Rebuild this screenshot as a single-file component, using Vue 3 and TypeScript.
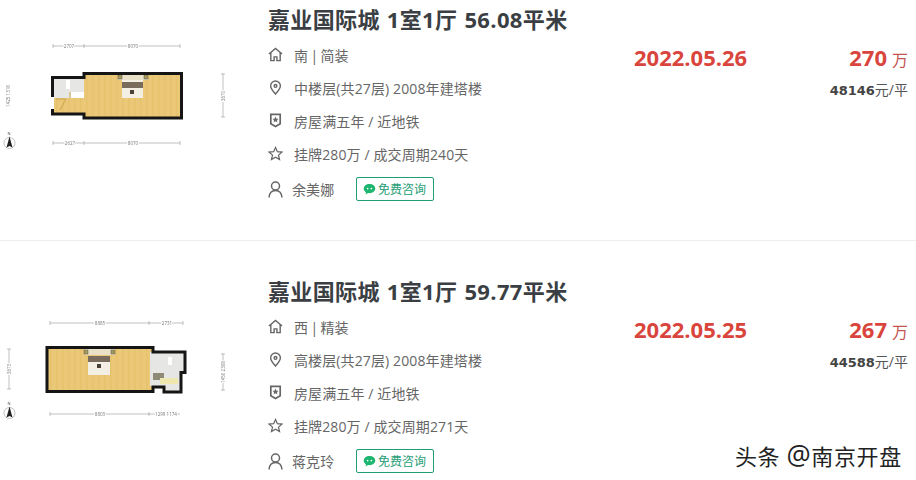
<script setup lang="ts">
interface Listing {
  title: string;
  face: string;
  floor: string;
  traffic: string;
  deal: string;
  agent: string;
  date: string;
  price: string;
  unit: string;
  plan: "a" | "b";
}

const listings: Listing[] = [
  {
    title: "嘉业国际城 1室1厅 56.08平米",
    face: "南 | 简装",
    floor: "中楼层(共27层) 2008年建塔楼",
    traffic: "房屋满五年 / 近地铁",
    deal: "挂牌280万 / 成交周期240天",
    agent: "余美娜",
    date: "2022.05.26",
    price: "270",
    unit: "48146",
    plan: "a",
  },
  {
    title: "嘉业国际城 1室1厅 59.77平米",
    face: "西 | 精装",
    floor: "高楼层(共27层) 2008年建塔楼",
    traffic: "房屋满五年 / 近地铁",
    deal: "挂牌280万 / 成交周期271天",
    agent: "蒋克玲",
    date: "2022.05.25",
    price: "267",
    unit: "44588",
    plan: "b",
  },
];
</script>

<template>
  <div class="page">
    <div v-for="item in listings" :key="item.date" class="listing">
      <svg v-if="item.plan === 'a'" class="plan" viewBox="0 0 240 130">
        <defs>
          <pattern id="wood-a" width="6" height="130" patternUnits="userSpaceOnUse">
            <rect width="6" height="130" fill="#ebc877" />
            <rect x="2" width="1.500" height="130" fill="#e6c26c" />
          </pattern>
        </defs>
        <g class="dim">
          <path d="M53 16H180M53 14v4M84 14v4M180 14v4" />
          <path d="M53 113H180M53 111v4M84 111v4M180 111v4" />
          <path d="M223 44v43M221 44h4M221 87h4" />
        </g>
        <g class="dim-text">
          <text x="69" y="18" text-anchor="middle">2707</text>
          <text x="133" y="18" text-anchor="middle">8070</text>
          <text x="70" y="115" text-anchor="middle">2627</text>
          <text x="133" y="115" text-anchor="middle">8070</text>
          <text transform="translate(10 66) rotate(-90)" text-anchor="middle">1425 1318</text>
          <text transform="translate(224.500 66) rotate(-90)" text-anchor="middle">3670</text>
        </g>
        <path d="M84 44H181V88H84V83H54V68H84Z" fill="url(#wood-a)" />
        <path class="tile" d="M54 48H84V62H71V68H54Z" />
        <rect x="66" y="50" width="4" height="9" fill="#fff" />
        <rect x="118" y="44" width="30" height="6" fill="#e9e2c8" />
        <rect class="bed-side" x="118" y="45" width="4" height="4" />
        <rect class="bed-side" x="144" y="45" width="4" height="4" />
        <rect class="bed" x="122" y="50" width="21" height="18" />
        <rect class="bed-head" x="122" y="52" width="21" height="6" />
        <rect x="130" y="60" width="4" height="4" fill="#4a4136" />
        <path class="wall" d="M52.500 67V47.500H84V43.500H181.500V88H84V84H52.500V79" />
        <path class="door" d="M56 69H66L60 80" />
        <path d="M70 62V68" stroke="#c9a64f" fill="none" />
        <g class="north">
          <text x="9" y="105" text-anchor="middle">N</text>
          <circle cx="9.500" cy="113" r="5.500" />
          <path d="M9.500 106.500L6.500 117.500L9.500 116L12.500 117.500Z" />
        </g>
      </svg>
      <svg v-else class="plan" viewBox="0 0 240 130">
        <defs>
          <pattern id="wood-b" width="6" height="130" patternUnits="userSpaceOnUse">
            <rect width="6" height="130" fill="#ebc877" />
            <rect x="2" width="1.500" height="130" fill="#e6c26c" />
          </pattern>
        </defs>
        <g class="dim">
          <path d="M50 21H183M50 19v4M149 19v4M183 19v4" />
          <path d="M50 112H180M50 110v4M149 110v4" />
          <path d="M9 47v40M7 47h4M7 87h4" />
          <path d="M223 52v36M221 52h4M221 88h4" />
        </g>
        <g class="dim-text">
          <text x="100" y="23" text-anchor="middle">8885</text>
          <text x="167" y="23" text-anchor="middle">2731</text>
          <text x="100" y="114" text-anchor="middle">8803</text>
          <text x="166" y="114" text-anchor="middle">1299 1174</text>
          <text transform="translate(10.500 67) rotate(-90)" text-anchor="middle">3673</text>
          <text transform="translate(224.500 70) rotate(-90)" text-anchor="middle">1450 2308</text>
        </g>
        <path d="M48 45H152V89H48Z" fill="url(#wood-b)" />
        <path class="tile" d="M150 50H184V70H180V89H164V84H150Z" />
        <rect x="85" y="47" width="30" height="6" fill="#e9e2c8" />
        <rect class="bed-side" x="84" y="48" width="4" height="4" />
        <rect class="bed-side" x="111" y="48" width="4" height="4" />
        <rect class="bed" x="88" y="54" width="22" height="19" />
        <rect class="bed-head" x="88" y="54" width="22" height="6" />
        <rect x="97" y="62" width="4" height="4" fill="#4a4136" />
        <rect x="153" y="71" width="11" height="7" fill="#8f8a78" />
        <rect class="bath" x="160" y="76" width="18" height="6" />
        <rect x="168" y="55" width="4" height="8" fill="#fff" />
        <path class="wall" d="M47 45.500H153V50H185V70.500H181V90H164V85H153V89.500H47Z" />
        <g class="north">
          <text x="9" y="103" text-anchor="middle">N</text>
          <circle cx="9.500" cy="111" r="5.500" />
          <path d="M9.500 104.500L6.500 115.500L9.500 114L12.500 115.500Z" />
        </g>
      </svg>

      <div class="info">
        <h2 class="title">{{ item.title }}</h2>
        <div class="meta">
          <svg class="icon" viewBox="0 0 16 16">
            <path d="M1 7.500L8 1.500L15 7.500M3 6V14.500H6.500V10.500H9.500V14.500H13V6" />
          </svg>
          <span class="face">{{ item.face }}</span>
        </div>
        <div class="meta">
          <svg class="icon" viewBox="0 0 16 16">
            <path d="M8 15C5 11.500 2.800 9 2.800 6.300A5.200 5.200 0 0 1 13.200 6.300C13.200 9 11 11.500 8 15Z" />
            <circle cx="8" cy="6.300" r="1.500" />
          </svg>
          <span>{{ item.floor }}</span>
        </div>
        <div class="meta">
          <svg class="icon" viewBox="0 0 16 16">
            <path class="thick" d="M3 1.500H13V11.500L8 14.500L3 11.500Z" />
            <path class="fill" d="M8 3.800L9 6L11.200 6.200L9.600 7.700L10 9.900L8 8.800L6 9.900L6.400 7.700L4.800 6.200L7 6Z" />
          </svg>
          <span>{{ item.traffic }}</span>
        </div>
        <div class="meta">
          <svg class="icon star" viewBox="0 0 16 16">
            <path d="M8 1.500L10 6L14.800 6.500L11.200 9.700L12.300 14.500L8 12L3.700 14.500L4.800 9.700L1.200 6.500L6 6Z" />
          </svg>
          <span>{{ item.deal }}</span>
        </div>
        <div class="meta agent">
          <svg class="icon person" viewBox="0 0 15 17">
            <circle cx="7.500" cy="5" r="4" />
            <path d="M1 16.500C1.400 12 3.800 9.500 7.500 9.500S13.600 12 14 16.500" />
          </svg>
          <span class="agent-name">{{ item.agent }}</span>
          <span class="consult">
            <svg class="chat" viewBox="0 0 14 14">
              <path d="M7 1C3.400 1 .8 3.200 .8 6C.8 7.700 1.700 9.100 3.200 10L2.800 12.500L5.300 10.900C5.900 11 6.400 11 7 11C10.600 11 13.200 8.800 13.200 6S10.600 1 7 1Z" />
              <circle cx="5" cy="6" r=".9" />
              <circle cx="9" cy="6" r=".9" />
            </svg>
            免费咨询
          </span>
        </div>
      </div>

      <div class="date">{{ item.date }}</div>

      <div class="price">
        <div class="total">
          <b>{{ item.price }}</b>
          <span>万</span>
        </div>
        <div class="per"><b>{{ item.unit }}</b>元/平</div>
      </div>
    </div>

    <div class="watermark">头条 <span class="at">@</span>南京开盘</div>
  </div>
</template>

<style>
html,
body {
  background: #fff;
  overflow: hidden;
}
</style>

<style scoped>
.page {
  position: relative;
  width: 916px;
  height: 480px;
  overflow: hidden;
  font-family: "Open Sans", "Noto Sans CJK SC", sans-serif;
  color: #666;
}

.listing {
  display: flex;
  height: 241px;
  margin-bottom: 31px;
  border-bottom: 1px solid #eee;
  box-sizing: border-box;
}

.listing:last-of-type {
  border-bottom: none;
}

.plan {
  flex: none;
  width: 240px;
  height: 130px;
  margin-top: 30px;
  filter: blur(0.5px);
}

.dim path {
  fill: none;
  stroke: #999;
  stroke-width: 0.6;
}

.dim-text text {
  font-size: 4.500px;
  fill: #777;
  paint-order: stroke;
  stroke: #fff;
  stroke-width: 2px;
}

.tile {
  fill: #e6e6e4;
}

.wall {
  fill: none;
  stroke: #151515;
  stroke-width: 3;
}

.bed {
  fill: #f3efe4;
}

.bed-head {
  fill: #7a6c5c;
}

.bed-side {
  fill: #a89a5a;
  stroke: #555;
  stroke-width: 0.5;
}

.bath {
  fill: #eee8b0;
}

.door {
  fill: none;
  stroke: #c9a64f;
  stroke-width: 1;
}

.north path {
  fill: #222;
}

.north circle {
  fill: none;
  stroke: #999;
  stroke-width: 0.6;
}

.north text {
  font-size: 4px;
  fill: #444;
}

.info {
  flex: none;
  width: 366px;
  margin-left: 28px;
}

.title {
  height: 38px;
  margin: 0;
  font-size: 22px;
  font-weight: 700;
  line-height: 38px;
  letter-spacing: 0.35px;
  word-spacing: 1px;
  white-space: nowrap;
  color: #3b3f44;
}

.meta {
  display: flex;
  align-items: center;
  height: 33px;
  font-size: 14px;
  letter-spacing: 0.12px;
}

.face {
  word-spacing: -1.500px;
}

.icon {
  flex: none;
  width: 15px;
  height: 15px;
  margin-right: 11px;
  fill: none;
  stroke: #666;
  stroke-width: 1.500;
}

.star {
  stroke-width: 1.300;
}

.icon .thick {
  stroke-width: 1.800;
}

.icon .fill {
  fill: #666;
  stroke: none;
}

.agent {
  height: 38px;
}

.agent .icon {
  margin-right: 9px;
}

.person {
  height: 17px;
}

.agent-name {
  width: 64px;
}

.consult {
  display: flex;
  align-items: center;
  gap: 2px;
  width: 78px;
  height: 24px;
  box-sizing: border-box;
  padding-left: 6px;
  border: 1px solid #1f9d75;
  border-radius: 2px;
  font-size: 12px;
  letter-spacing: 0;
  color: #1f9d75;
}

.chat {
  flex: none;
  width: 13px;
  height: 13px;
  fill: #1db56f;
}

.chat circle {
  fill: #fff;
}

.date {
  flex: none;
  width: 150px;
  padding-top: 42px;
  font-size: 22px;
  font-weight: 700;
  line-height: 30px;
  color: #d9453d;
}

.price {
  flex: 1;
  padding: 42px 8px 0 0;
  text-align: right;
}

.total {
  height: 30px;
  line-height: 30px;
  color: #d9453d;
}

.total b {
  font-size: 22px;
}

.total span {
  margin-left: 5px;
  font-size: 16px;
  color: #c4554f;
}

.per {
  margin-top: 8px;
  font-size: 14px;
  line-height: 20px;
  color: #555;
}

.per b {
  font-family: "DejaVu Sans", sans-serif;
  font-size: 13px;
  color: #444;
}

.watermark {
  position: absolute;
  left: 735px;
  top: 441px;
  font-size: 22px;
  line-height: 28px;
  letter-spacing: 0.6px;
  white-space: nowrap;
  color: #222;
  text-shadow: 1px 1px 0 #fff, -1px -1px 0 #fff;
}

.at {
  font-size: 27px;
  line-height: 28px;
}
</style>
